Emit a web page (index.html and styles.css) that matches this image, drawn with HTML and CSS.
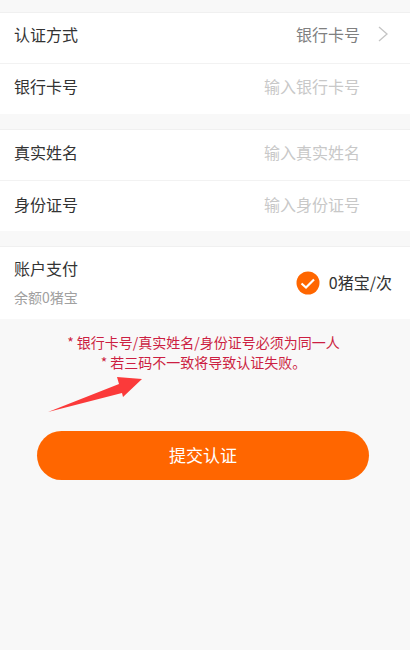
FILE: index.html
```html
<!DOCTYPE html>
<html lang="zh-CN">
<head>
    <meta charset="UTF-8">
    <title>认证</title>
    <link rel="stylesheet" href="styles.css">
</head>
<body>

<div class="group group-top">
    <div class="row">
        <span class="label">认证方式</span>
        <span class="value">银行卡号</span>
        <svg class="chevron" width="12" height="18" viewBox="0 0 12 18"><path d="M2 2l8 7-8 7" fill="none" stroke="#c4c4c4" stroke-width="1.3"/></svg>
    </div>
    <div class="row">
        <span class="label">银行卡号</span>
        <span class="hint">输入银行卡号</span>
    </div>
</div>

<div class="group">
    <div class="row">
        <span class="label">真实姓名</span>
        <span class="hint">输入真实姓名</span>
    </div>
    <div class="row">
        <span class="label">身份证号</span>
        <span class="hint">输入身份证号</span>
    </div>
</div>

<div class="group pay">
    <div class="pay-info">
        <span class="label">账户支付</span>
        <span class="balance">余额0猪宝</span>
    </div>
    <div class="pay-price">
        <svg class="check" width="24" height="24" viewBox="0 0 24 24"><circle cx="12" cy="12" r="11.5" fill="#ff6600"/><path d="M5.5 12.5l4.5 4 8-8" fill="none" stroke="#fff" stroke-width="2.2"/></svg>
        <span class="price">0猪宝/次</span>
    </div>
</div>

<div class="notes">
    <p>* 银行卡号/真实姓名/身份证号必须为同一人</p>
    <p>* 若三码不一致将导致认证失败。</p>
</div>

<svg class="arrow" width="100" height="40" viewBox="0 0 100 40"><path d="M0 35L71 7 69 0 94 2 75 20 74 16z" fill="#fb3a3a"/></svg>

<button class="submit">提交认证</button>

</body>
</html>
```

FILE: styles.css
```css
body {
    font-family: "Noto Sans CJK SC", "Liberation Sans", sans-serif;
    background-color: #f8f8f8;
    margin: 0;
    padding-top: 12px;
    height: 638px;
    overflow: hidden;
    position: relative;
    color: #333333;
}
.group {
    background-color: #ffffff;
    border-top: 1px solid #f0f0f0;
    margin-bottom: 15px;
}
.row {
    height: 43px;
    display: flex;
    align-items: center;
    padding: 0 14px 7px;
    border-bottom: 1px solid #f2f2f2;
}
.row:last-child {
    height: 45px;
    padding-bottom: 5px;
    border-bottom: none;
}
.group-top .row {
    height: 41px;
    padding-bottom: 9px;
}
.group-top .row:last-child {
    height: 43px;
    padding-bottom: 7px;
}
.label {
    font-size: 16px;
    flex: 1;
}
.value {
    font-size: 16px;
    color: #808080;
    margin-right: 17px;
    margin-left: auto;
}
.chevron {
    margin-right: 7px;
}
.hint {
    font-size: 16px;
    color: #c8c8c8;
    margin-right: 36px;
}
.pay {
    height: 72px;
    margin-bottom: 0;
    display: flex;
    align-items: center;
    justify-content: space-between;
    padding: 0 18px 0 14px;
}
.pay-info {
    display: flex;
    flex-direction: column;
    gap: 7px;
    margin-top: -3px;
}
.pay-info .label {
    line-height: 24px;
}
.balance {
    font-size: 14px;
    line-height: 20px;
    color: #a0a0a0;
}
.pay-price {
    display: flex;
    align-items: center;
    gap: 9px;
    margin-left: -1px;
}
.price {
    font-size: 16px;
    margin-top: -2px;
}
.notes {
    margin-top: 13px;
    padding-right: 3px;
    text-align: center;
    font-size: 14px;
    line-height: 20px;
    color: #cc1f42;
}
.notes p {
    margin: 0;
}
.arrow {
    position: absolute;
    left: 48px;
    top: 377px;
}
.submit {
    display: block;
    width: 332px;
    height: 49px;
    margin: 59px 0 0 37px;
    padding: 0 0 2px;
    border: none;
    border-radius: 25px;
    background-color: #ff6600;
    color: #ffffff;
    font-family: inherit;
    font-size: 17px;
}
```
